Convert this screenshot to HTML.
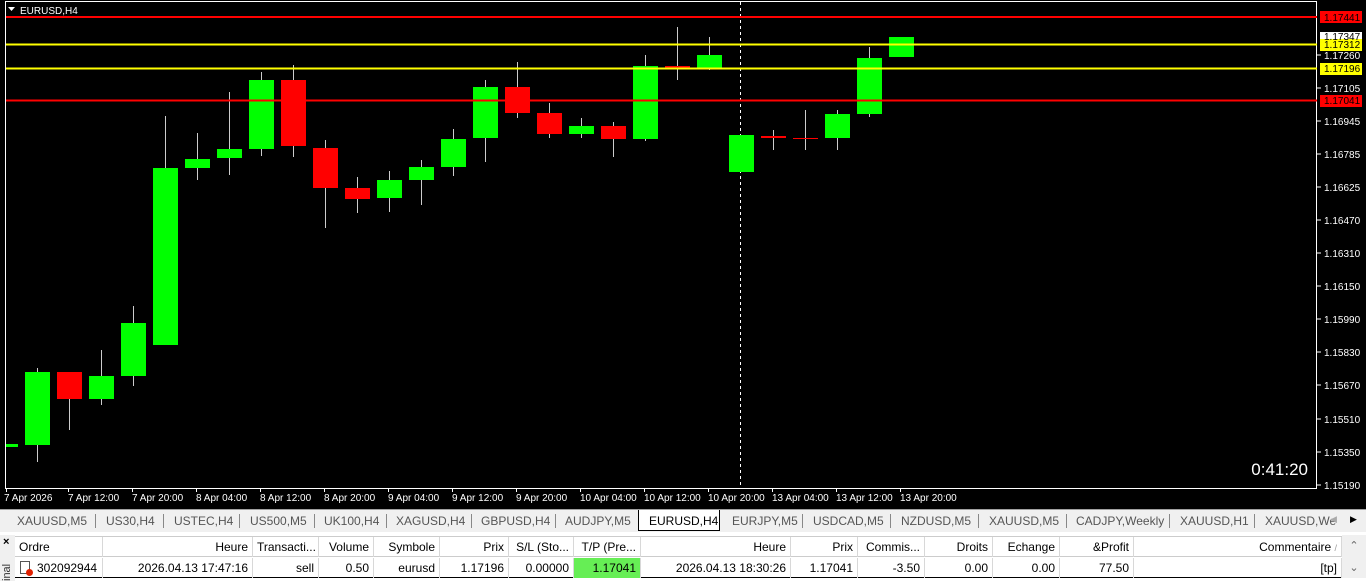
<!DOCTYPE html>
<html><head><meta charset="utf-8"><style>
body{margin:0;width:1366px;height:581px;overflow:hidden;background:#fff;font-family:"Liberation Sans",sans-serif;position:relative}
.ax{position:absolute;font-size:10px;color:#fff}
.tabs{position:absolute;left:0;top:509px;width:1366px;height:22px;background:#f0f0f0;border-top:1px solid #a0a0a0;font-size:12px;color:#555}
.tab{position:absolute;top:4px}
.sep{position:absolute;top:4px;width:1px;height:14px;background:#888}
.tbl{position:absolute;top:535px;left:0;width:1366px;height:46px;font-size:12px;color:#000}
.c{position:absolute;height:20px;line-height:20px;border-right:1px solid #d8d8d8;box-sizing:border-box;padding:0 4px;white-space:nowrap;overflow:hidden}
</style></head><body>
<div style="position:absolute;left:0;top:0;width:1366px;height:509px;background:#000"></div>
<svg style="position:absolute;left:0;top:0" width="1366" height="509">
<rect x="5.5" y="1.5" width="1311" height="487" fill="none" stroke="#fff" stroke-width="1"/>
<line x1="740.5" y1="2" x2="740.5" y2="488" stroke="#fff" stroke-dasharray="3,3"/>
<g stroke="#ccc" stroke-width="1">
<line x1="37.5" y1="368" x2="37.5" y2="462"/><line x1="69.5" y1="372" x2="69.5" y2="430"/><line x1="101.5" y1="350" x2="101.5" y2="405"/><line x1="133.5" y1="306" x2="133.5" y2="386"/><line x1="165.5" y1="116" x2="165.5" y2="345"/><line x1="197.5" y1="133" x2="197.5" y2="180"/><line x1="229.5" y1="92" x2="229.5" y2="175"/><line x1="261.5" y1="72" x2="261.5" y2="156"/><line x1="293.5" y1="65" x2="293.5" y2="157"/><line x1="325.5" y1="140" x2="325.5" y2="228"/><line x1="357.5" y1="177" x2="357.5" y2="213"/><line x1="389.5" y1="171" x2="389.5" y2="212"/><line x1="421.5" y1="160" x2="421.5" y2="205"/><line x1="453.5" y1="129" x2="453.5" y2="176"/><line x1="485.5" y1="80" x2="485.5" y2="162"/><line x1="517.5" y1="62" x2="517.5" y2="118"/><line x1="549.5" y1="103" x2="549.5" y2="138"/><line x1="581.5" y1="118" x2="581.5" y2="138"/><line x1="613.5" y1="122" x2="613.5" y2="157"/><line x1="645.5" y1="55" x2="645.5" y2="141"/><line x1="677.5" y1="27" x2="677.5" y2="80"/><line x1="709.5" y1="37" x2="709.5" y2="70"/><line x1="773.5" y1="130" x2="773.5" y2="150"/><line x1="805.5" y1="110" x2="805.5" y2="150"/><line x1="837.5" y1="110" x2="837.5" y2="150"/><line x1="869.5" y1="47" x2="869.5" y2="117"/>
</g>
<g fill="#00ff00">
<rect x="6" y="444" width="12" height="3"/>
<rect x="25" y="372" width="25" height="73"/><rect x="89" y="376" width="25" height="23"/><rect x="121" y="323" width="25" height="53"/><rect x="153" y="168" width="25" height="177"/><rect x="185" y="159" width="25" height="9"/><rect x="217" y="149" width="25" height="9"/><rect x="249" y="80" width="25" height="69"/><rect x="377" y="180" width="25" height="18"/><rect x="409" y="167" width="25" height="13"/><rect x="441" y="139" width="25" height="28"/><rect x="473" y="87" width="25" height="51"/><rect x="569" y="126" width="25" height="8"/><rect x="633" y="66" width="25" height="73"/><rect x="697" y="55" width="25" height="13"/><rect x="729" y="135" width="25" height="37"/><rect x="825" y="114" width="25" height="24"/><rect x="857" y="58" width="25" height="56"/><rect x="889" y="37" width="25" height="20"/>
</g>
<g fill="#ff0000">
<rect x="57" y="372" width="25" height="27"/><rect x="281" y="80" width="25" height="66"/><rect x="313" y="148" width="25" height="40"/><rect x="345" y="188" width="25" height="11"/><rect x="505" y="87" width="25" height="26"/><rect x="537" y="113" width="25" height="21"/><rect x="601" y="126" width="25" height="13"/><rect x="665" y="66" width="25" height="2"/><rect x="761" y="136" width="25" height="2"/><rect x="793" y="138" width="25" height="1"/>
</g>
<line x1="6" y1="17" x2="1317" y2="17" stroke="#ff0000" stroke-width="2"/>
<line x1="6" y1="44.5" x2="1317" y2="44.5" stroke="#ffff00" stroke-width="2"/>
<line x1="6" y1="68.5" x2="1317" y2="68.5" stroke="#ffff00" stroke-width="2"/>
<line x1="6" y1="100.5" x2="1317" y2="100.5" stroke="#ff0000" stroke-width="2"/>
<g stroke="#fff"><line x1="1317" y1="55" x2="1321" y2="55"/><line x1="1317" y1="88" x2="1321" y2="88"/><line x1="1317" y1="121" x2="1321" y2="121"/><line x1="1317" y1="154" x2="1321" y2="154"/><line x1="1317" y1="187" x2="1321" y2="187"/><line x1="1317" y1="220" x2="1321" y2="220"/><line x1="1317" y1="253" x2="1321" y2="253"/><line x1="1317" y1="286" x2="1321" y2="286"/><line x1="1317" y1="319" x2="1321" y2="319"/><line x1="1317" y1="352" x2="1321" y2="352"/><line x1="1317" y1="385" x2="1321" y2="385"/><line x1="1317" y1="419" x2="1321" y2="419"/><line x1="1317" y1="452" x2="1321" y2="452"/><line x1="1317" y1="485" x2="1321" y2="485"/>
<line x1="6.5" y1="488" x2="6.5" y2="492"/><line x1="68.5" y1="488" x2="68.5" y2="492"/><line x1="132.5" y1="488" x2="132.5" y2="492"/><line x1="196.5" y1="488" x2="196.5" y2="492"/><line x1="260.5" y1="488" x2="260.5" y2="492"/><line x1="324.5" y1="488" x2="324.5" y2="492"/><line x1="388.5" y1="488" x2="388.5" y2="492"/><line x1="452.5" y1="488" x2="452.5" y2="492"/><line x1="516.5" y1="488" x2="516.5" y2="492"/><line x1="580.5" y1="488" x2="580.5" y2="492"/><line x1="644.5" y1="488" x2="644.5" y2="492"/><line x1="708.5" y1="488" x2="708.5" y2="492"/><line x1="772.5" y1="488" x2="772.5" y2="492"/><line x1="836.5" y1="488" x2="836.5" y2="492"/><line x1="900.5" y1="488" x2="900.5" y2="492"/></g>
<path d="M8 7h7l-3.5 4z" fill="#fff"/>
<g font-family="Liberation Sans" font-size="10" fill="#fff">
<text x="20" y="14">EURUSD,H4</text>
<text x="1324" y="43">1.17420</text>
<text x="1324" y="59">1.17260</text><text x="1324" y="92">1.17105</text><text x="1324" y="125">1.16945</text><text x="1324" y="158">1.16785</text><text x="1324" y="191">1.16625</text><text x="1324" y="224">1.16470</text><text x="1324" y="257">1.16310</text><text x="1324" y="290">1.16150</text><text x="1324" y="323">1.15990</text><text x="1324" y="356">1.15830</text><text x="1324" y="389">1.15670</text><text x="1324" y="423">1.15510</text><text x="1324" y="456">1.15350</text><text x="1324" y="489">1.15190</text>
<text x="4" y="501">7 Apr 2026</text><text x="68" y="501">7 Apr 12:00</text><text x="132" y="501">7 Apr 20:00</text><text x="196" y="501">8 Apr 04:00</text><text x="260" y="501">8 Apr 12:00</text><text x="324" y="501">8 Apr 20:00</text><text x="388" y="501">9 Apr 04:00</text><text x="452" y="501">9 Apr 12:00</text><text x="516" y="501">9 Apr 20:00</text><text x="580" y="501">10 Apr 04:00</text><text x="644" y="501">10 Apr 12:00</text><text x="708" y="501">10 Apr 20:00</text><text x="772" y="501">13 Apr 04:00</text><text x="836" y="501">13 Apr 12:00</text><text x="900" y="501">13 Apr 20:00</text>
</g>
<rect x="1320" y="11" width="42" height="12" fill="#ff0000"/>
<rect x="1320" y="32" width="42" height="11" fill="#fff"/>
<rect x="1320" y="39" width="42" height="12" fill="#ffff00"/>
<rect x="1320" y="63" width="42" height="12" fill="#ffff00"/>
<rect x="1320" y="95" width="42" height="12" fill="#ff0000"/>
<g font-family="Liberation Sans" font-size="10">
<text x="1324" y="21" fill="#000">1.17441</text>
<text x="1324" y="40" fill="#000">1.17347</text>
<text x="1324" y="48" fill="#000">1.17312</text>
<text x="1324" y="72" fill="#000">1.17196</text>
<text x="1324" y="104" fill="#000">1.17041</text>
</g>
<text x="1308" y="475" font-family="Liberation Sans" font-size="17" fill="#fff" text-anchor="end">0:41:20</text>
</svg>
<div class="tabs">
<span class="tab" style="left:17px">XAUUSD,M5</span><span class="sep" style="left:95px"></span>
<span class="tab" style="left:106px">US30,H4</span><span class="sep" style="left:163px"></span>
<span class="tab" style="left:174px">USTEC,H4</span><span class="sep" style="left:239px"></span>
<span class="tab" style="left:250px">US500,M5</span><span class="sep" style="left:314px"></span>
<span class="tab" style="left:324px">UK100,H4</span><span class="sep" style="left:386px"></span>
<span class="tab" style="left:396px">XAGUSD,H4</span><span class="sep" style="left:471px"></span>
<span class="tab" style="left:481px">GBPUSD,H4</span><span class="sep" style="left:555px"></span>
<span class="tab" style="left:565px">AUDJPY,M5</span>
<span style="position:absolute;left:638px;top:0;width:82px;height:21px;background:#fff;border:1px solid #000;border-top:none;box-sizing:border-box"></span>
<span class="tab" style="left:649px;color:#000">EURUSD,H4</span>
<span class="tab" style="left:732px">EURJPY,M5</span><span class="sep" style="left:802px"></span>
<span class="tab" style="left:813px">USDCAD,M5</span><span class="sep" style="left:890px"></span>
<span class="tab" style="left:901px">NZDUSD,M5</span><span class="sep" style="left:978px"></span>
<span class="tab" style="left:989px">XAUUSD,M5</span><span class="sep" style="left:1066px"></span>
<span class="tab" style="left:1076px">CADJPY,Weekly</span><span class="sep" style="left:1169px"></span>
<span class="tab" style="left:1180px">XAUUSD,H1</span><span class="sep" style="left:1254px"></span>
<span class="tab" style="left:1265px">XAUUSD,We</span>
<span class="tab" style="left:1330px;color:#aaa;font-size:9px">◀</span><span class="tab" style="left:1350px;color:#000;font-size:9px">▶</span>
</div>
<div class="tbl">
<div style="position:absolute;left:0;top:0;width:15px;height:46px;background:#f0f0f0"></div>
<div style="position:absolute;left:3px;top:1px;font-size:11px;font-weight:bold">×</div>
<div style="position:absolute;left:0;top:24px;font-size:11px;color:#333;transform:rotate(-90deg);transform-origin:left top;top:46px;left:1px">inal</div>
<div style="position:absolute;left:15px;top:1px;width:1327px;height:21px;border-top:1px solid #ccc;border-bottom:1px solid #ccc;box-sizing:border-box"></div>
<div style="position:absolute;left:15px;top:42px;width:1351px;height:1px;background:#000"></div>
<div style="position:absolute;left:1342px;top:0;width:24px;height:43px;background:#f0f0f0;font-size:11px;color:#666;text-align:center;line-height:22px">⌃<br>⌄</div>
<div style="position:absolute;top:2px;left:0">
<div class="c" style="left:15px;width:88px">Ordre</div>
<div class="c" style="left:103px;width:150px;text-align:right">Heure</div>
<div class="c" style="left:253px;width:66px">Transacti...</div>
<div class="c" style="left:319px;width:55px;text-align:right">Volume</div>
<div class="c" style="left:374px;width:66px;text-align:right">Symbole</div>
<div class="c" style="left:440px;width:69px;text-align:right">Prix</div>
<div class="c" style="left:509px;width:65px;text-align:right">S/L (Sto...</div>
<div class="c" style="left:574px;width:67px;text-align:right">T/P (Pre...</div>
<div class="c" style="left:641px;width:150px;text-align:right">Heure</div>
<div class="c" style="left:791px;width:67px;text-align:right">Prix</div>
<div class="c" style="left:858px;width:67px;text-align:right">Commis...</div>
<div class="c" style="left:925px;width:68px;text-align:right">Droits</div>
<div class="c" style="left:993px;width:67px;text-align:right">Echange</div>
<div class="c" style="left:1060px;width:74px;text-align:right">&amp;Profit</div>
<div class="c" style="left:1134px;width:208px;text-align:right">Commentaire <span style="color:#999;font-size:9px">/</span></div>
</div>
<div style="position:absolute;top:23px;left:0">
<div class="c" style="left:15px;width:88px;padding-left:22px">302092944</div>
<div style="position:absolute;left:20px;top:3px;width:10px;height:13px;border:1px solid #555;background:#fff;box-sizing:border-box"></div>
<div style="position:absolute;left:26px;top:11px;width:7px;height:7px;border-radius:50%;background:#e02000"></div>
<div class="c" style="left:103px;width:150px;text-align:right">2026.04.13 17:47:16</div>
<div class="c" style="left:253px;width:66px;text-align:right">sell</div>
<div class="c" style="left:319px;width:55px;text-align:right">0.50</div>
<div class="c" style="left:374px;width:66px;text-align:right">eurusd</div>
<div class="c" style="left:440px;width:69px;text-align:right">1.17196</div>
<div class="c" style="left:509px;width:65px;text-align:right">0.00000</div>
<div class="c" style="left:574px;width:67px;text-align:right;background:#66ee55">1.17041</div>
<div class="c" style="left:641px;width:150px;text-align:right">2026.04.13 18:30:26</div>
<div class="c" style="left:791px;width:67px;text-align:right">1.17041</div>
<div class="c" style="left:858px;width:67px;text-align:right">-3.50</div>
<div class="c" style="left:925px;width:68px;text-align:right">0.00</div>
<div class="c" style="left:993px;width:67px;text-align:right">0.00</div>
<div class="c" style="left:1060px;width:74px;text-align:right">77.50</div>
<div class="c" style="left:1134px;width:208px;text-align:right">[tp]</div>
</div>
</div>
</body></html>
